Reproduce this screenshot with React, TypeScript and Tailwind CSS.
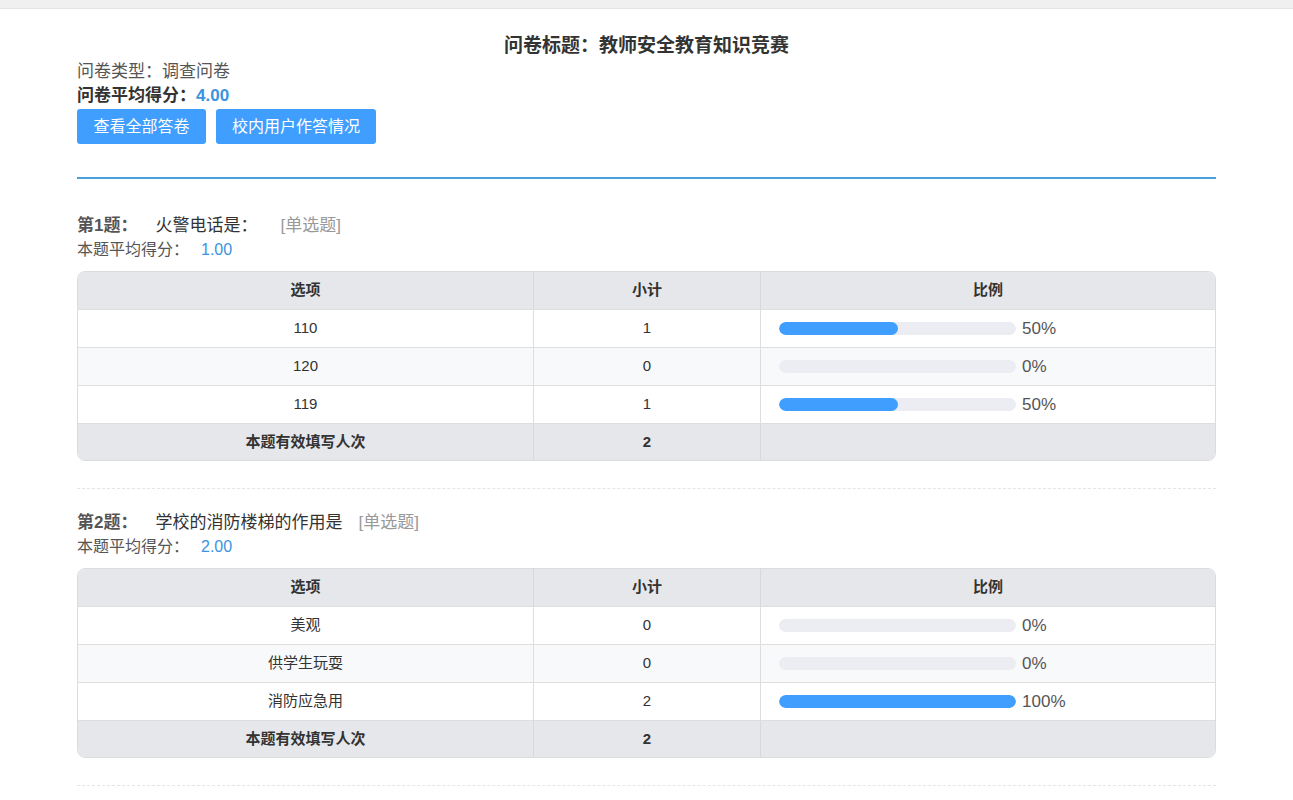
import React from "react";

const font = { fontFamily: '"Liberation Sans", "Noto Sans CJK SC", sans-serif' };

type Q = { n: number; title: string; gap: string; avg: string; rows: [string, number, number][]; total: number };

const qs: Q[] = [
  { n: 1, title: "火警电话是：", gap: "ml-[23px]", avg: "1.00", rows: [["110", 1, 50], ["120", 0, 0], ["119", 1, 50]], total: 2 },
  { n: 2, title: "学校的消防楼梯的作用是", gap: "ml-[16px]", avg: "2.00", rows: [["美观", 0, 0], ["供学生玩耍", 0, 0], ["消防应急用", 2, 100]], total: 2 },
];

function Question({ q }: { q: Q }) {
  return (
    <div className={`${q.n === 1 ? "pt-[35px]" : "pt-[22px]"} pb-[27px] border-b border-dashed border-[#e5e5e5]`}>
      <div className="text-[17px] leading-[24px] text-[#333] flex">
        <span className="font-bold text-[#555]">第{q.n}题：</span>
        <span className="ml-[18px]">{q.title}</span>
        <span className={`${q.gap} text-[#999]`}>[单选题]</span>
      </div>
      <div className="text-[16px] leading-[24px] text-[#555] mb-[9px]">
        本题平均得分：<span className="ml-[12px] text-[#3a94e0]">{q.avg}</span>
      </div>
      <div className="rounded-[8px] border border-[#dcdcdc] overflow-hidden text-[15px] text-[#333]">
        <div className="grid grid-cols-[456px_227px_1fr] bg-[#e6e7ea] h-[37px] font-bold items-center">
          <div className="text-center border-r border-[#d8d8d8] h-full flex items-center justify-center">选项</div>
          <div className="text-center border-r border-[#d8d8d8] h-full flex items-center justify-center">小计</div>
          <div className="text-center h-full flex items-center justify-center">比例</div>
        </div>
        {q.rows.map(([label, c, p], i) => (
          <div key={i} className={`grid grid-cols-[456px_227px_1fr] h-[38px] border-t border-[#dedede] ${i % 2 ? "bg-[#f8f9fa]" : "bg-white"}`}>
            <div className="border-r border-[#dedede] flex items-center justify-center">{label}</div>
            <div className="border-r border-[#dedede] flex items-center justify-center">{c}</div>
            <div className="flex items-center pl-[18px]">
              <div className="w-[237px] h-[13px] rounded-full bg-[#ebedf2] overflow-hidden">
                <div className="h-full rounded-full bg-[#409eff]" style={{ width: `${p}%` }} />
              </div>
              <span className="ml-[6px] text-[17px] text-[#555]">{p}%</span>
            </div>
          </div>
        ))}
        <div className="grid grid-cols-[456px_227px_1fr] bg-[#e6e7ea] h-[37px] font-bold border-t border-[#dedede]">
          <div className="border-r border-[#d8d8d8] flex items-center justify-center">本题有效填写人次</div>
          <div className="border-r border-[#d8d8d8] flex items-center justify-center">{q.total}</div>
          <div />
        </div>
      </div>
    </div>
  );
}

export default function App() {
  return (
    <div className="min-h-[800px] bg-white" style={font}>
      <div className="h-[9px] bg-[#f0f0f0] border-b border-[#e4e4e4]" />
      <div className="mx-[77px] pt-[25px]">
        <div className="text-center font-bold text-[19px] text-[#333] leading-[24px]">问卷标题：教师安全教育知识竞赛</div>
        <div className="text-[17px] text-[#555] leading-[24px] mt-[2px]">问卷类型：调查问卷</div>
        <div className="text-[17px] font-bold text-[#333] leading-[24px]">问卷平均得分：<span className="text-[#3a94e0]">4.00</span></div>
        <div className="flex gap-[10px] mt-[1px]">
          <button className="w-[129px] h-[35px] rounded-[3px] bg-[#409eff] text-white text-[16px]">查看全部答卷</button>
          <button className="w-[160px] h-[35px] rounded-[3px] bg-[#409eff] text-white text-[16px]">校内用户作答情况</button>
        </div>
        <div className="mt-[33px] h-[2px] bg-[#4aa0dc]" />
        {qs.map((q) => <Question key={q.n} q={q} />)}
      </div>
    </div>
  );
}
